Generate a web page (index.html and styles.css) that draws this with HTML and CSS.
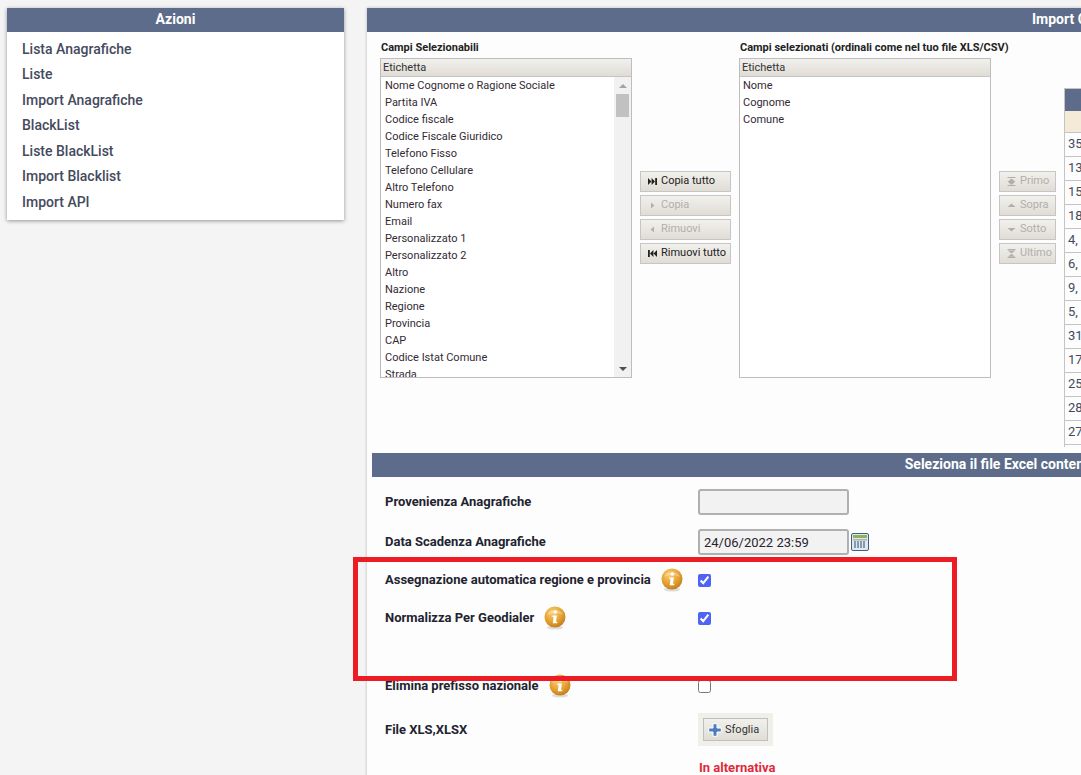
FILE: index.html
```html
<!DOCTYPE html>
<html lang="it">
<head>
<meta charset="utf-8">
<title>Import Contatti</title>
<link rel="stylesheet" href="styles.css">
</head>
<body>
<svg class="defs" width="0" height="0" aria-hidden="true">
  <defs>
    <radialGradient id="gold" cx="0.4" cy="0.3" r="0.8">
      <stop offset="0" stop-color="#f9d27a"/>
      <stop offset="0.55" stop-color="#e5a02f"/>
      <stop offset="1" stop-color="#b8741a"/>
    </radialGradient>
    <symbol id="info" viewBox="0 0 22 24">
      <ellipse cx="11" cy="21.5" rx="8" ry="2" fill="#ddd"/>
      <circle cx="11" cy="11" r="10.5" fill="url(#gold)"/>
      <path d="M3 9a8.5 7 0 0 1 16 0a12 8 0 0 0-16 0z" fill="#fff" opacity=".3"/>
      <circle cx="11.4" cy="6" r="1.7" fill="#fff"/>
      <path d="M8.6 9.6h4.3l-.9 6.2h1.4l-.3 1.5H8.8l.8-6.2H8.3z" fill="#fff"/>
    </symbol>
    <symbol id="i-last" viewBox="0 0 9 9"><path d="M0 1l3.4 3.5L0 8zM3.6 1l3.4 3.5L3.6 8zM7.2 1H9v7H7.2z"/></symbol>
    <symbol id="i-first" viewBox="0 0 9 9"><path d="M9 1L5.6 4.5 9 8zM5.4 1L2 4.5 5.4 8zM1.8 1H0v7h1.8z"/></symbol>
    <symbol id="i-next" viewBox="0 0 9 9"><path d="M3 1.5l3.4 3-3.4 3z"/></symbol>
    <symbol id="i-prev" viewBox="0 0 9 9"><path d="M6 1.5l-3.4 3 3.4 3z"/></symbol>
    <symbol id="i-top" viewBox="0 0 9 9"><path d="M.5 0h8v1h-8zM4.5 1.5L8 4.4H1zM.5 4.6h8L4.5 8zM.5 8h8v1h-8z"/></symbol>
    <symbol id="i-up" viewBox="0 0 9 9"><path d="M4.5 2.5L8.5 6H.5z"/></symbol>
    <symbol id="i-down" viewBox="0 0 9 9"><path d="M4.5 6.5L8.5 3H.5z"/></symbol>
    <symbol id="i-bottom" viewBox="0 0 9 9"><path d="M.5 0h8v1h-8zM.5 1.5h8L4.5 4.6zM4.5 4.8L8 7.8H1zM.5 8h8v1h-8z"/></symbol>
  </defs>
</svg>

<aside class="card">
  <h2 class="bar">Azioni</h2>
  <ul class="menu">
    <li>Lista Anagrafiche</li>
    <li>Liste</li>
    <li>Import Anagrafiche</li>
    <li>BlackList</li>
    <li>Liste BlackList</li>
    <li>Import Blacklist</li>
    <li>Import API</li>
  </ul>
</aside>

<main class="panel">
  <h1 class="bar">Import Contatti</h1>
  <section class="picker">
    <div class="col">
      <h3 class="col-title">Campi Selezionabili</h3>
      <div class="box">
        <div class="box-head">Etichetta</div>
        <div class="box-body">
          <ul class="items">
            <li>Nome Cognome o Ragione Sociale</li>
            <li>Partita IVA</li>
            <li>Codice fiscale</li>
            <li>Codice Fiscale Giuridico</li>
            <li>Telefono Fisso</li>
            <li>Telefono Cellulare</li>
            <li>Altro Telefono</li>
            <li>Numero fax</li>
            <li>Email</li>
            <li>Personalizzato 1</li>
            <li>Personalizzato 2</li>
            <li>Altro</li>
            <li>Nazione</li>
            <li>Regione</li>
            <li>Provincia</li>
            <li>CAP</li>
            <li>Codice Istat Comune</li>
            <li>Strada</li>
          </ul>
          <div class="scroll">
            <span class="arrow-up"></span>
            <span class="thumb"></span>
            <span class="arrow-down"></span>
          </div>
        </div>
      </div>
    </div>

    <div class="btns btns-move">
      <button class="btn"><svg class="ic"><use href="#i-last"/></svg>Copia tutto</button>
      <button class="btn off"><svg class="ic"><use href="#i-next"/></svg>Copia</button>
      <button class="btn off"><svg class="ic"><use href="#i-prev"/></svg>Rimuovi</button>
      <button class="btn"><svg class="ic"><use href="#i-first"/></svg>Rimuovi tutto</button>
    </div>

    <div class="col">
      <h3 class="col-title">Campi selezionati (ordinali come nel tuo file XLS/CSV)</h3>
      <div class="box">
        <div class="box-head">Etichetta</div>
        <div class="box-body">
          <ul class="items items-chosen">
            <li>Nome</li>
            <li>Cognome</li>
            <li>Comune</li>
          </ul>
        </div>
      </div>
    </div>

    <div class="btns btns-order">
      <button class="btn off"><svg class="ic"><use href="#i-top"/></svg>Primo</button>
      <button class="btn off"><svg class="ic"><use href="#i-up"/></svg>Sopra</button>
      <button class="btn off"><svg class="ic"><use href="#i-down"/></svg>Sotto</button>
      <button class="btn off"><svg class="ic"><use href="#i-bottom"/></svg>Ultimo</button>
    </div>

    <div class="sample">
      <div class="sample-head"></div>
      <div class="sample-sub"></div>
      <div class="sample-row">35</div>
      <div class="sample-row">13</div>
      <div class="sample-row">15</div>
      <div class="sample-row">18</div>
      <div class="sample-row">4,</div>
      <div class="sample-row">6,</div>
      <div class="sample-row">9,</div>
      <div class="sample-row">5,</div>
      <div class="sample-row">31</div>
      <div class="sample-row">17</div>
      <div class="sample-row">25</div>
      <div class="sample-row">28</div>
      <div class="sample-row">27</div>
      <div class="sample-row"></div>
    </div>
  </section>

  <section class="upload">
    <h2 class="bar">Seleziona il file Excel contenente le anagrafiche inserite</h2>
    <form class="form">
      <div class="row r-prov">
        <label class="lbl">Provenienza Anagrafiche</label>
        <input class="field" type="text">
      </div>
      <div class="row r-date">
        <label class="lbl">Data Scadenza Anagrafiche</label>
        <div class="ctl">
          <input class="field" type="text" value="24/06/2022 23:59">
          <svg class="cal" viewBox="0 0 18 18" width="18" height="18">
            <rect x=".5" y=".5" width="17" height="17" rx="1.5" fill="#dfe7ef" stroke="#3f5f86"/>
            <rect x="2" y="2" width="14" height="3" fill="#8fb35a"/>
            <rect x="2" y="6" width="14" height="1.5" fill="#aeb8a4"/>
            <path d="M4 8v7M7 8v7M10 8v7M13 8v7" stroke="#55708f" stroke-width="1.3"/>
          </svg>
        </div>
      </div>
      <div class="row r-auto">
        <label class="lbl">Assegnazione automatica regione e provincia<svg class="info"><use href="#info"/></svg></label>
        <input class="chk" type="checkbox" checked>
      </div>
      <div class="row r-norm">
        <label class="lbl">Normalizza Per Geodialer<svg class="info"><use href="#info"/></svg></label>
        <input class="chk" type="checkbox" checked>
      </div>
      <div class="row r-pref">
        <label class="lbl">Elimina prefisso nazionale<svg class="info"><use href="#info"/></svg></label>
        <input class="chk" type="checkbox">
      </div>
      <div class="row r-file">
        <label class="lbl lbl-file">File XLS,XLSX</label>
        <div class="file-wrap">
          <button class="file-btn" type="button">
            <svg viewBox="0 0 14 14" width="14" height="14"><path d="M5 .7h4v4.3h4.3v4H9v4.3H5V9H.7V5H5z" fill="#4f7cc0" stroke="#fff"/></svg>
            Sfoglia
          </button>
        </div>
      </div>
      <div class="row r-alt">
        <span></span>
        <strong class="alt">In alternativa</strong>
      </div>
    </form>
  </section>
</main>

<div class="highlight"></div>
</body>
</html>
```

FILE: styles.css
```css
* { box-sizing: border-box; }
html, body { height: 100%; }
body {
  margin: 0;
  padding: 8px 0 0 7px;
  display: flex;
  align-items: flex-start;
  gap: 23px;
  overflow: hidden;
  background: #f4f4f4;
  font-family: Roboto, "Liberation Sans", sans-serif;
  color: #222;
}
.defs { position: absolute; }
ul { list-style: none; margin: 0; padding: 0; }
h1, h2, h3 { margin: 0; }

.bar {
  height: 24px;
  line-height: 23px;
  background: #5c6c8a;
  color: #fff;
  font-size: 14px;
  font-weight: 700;
  text-align: center;
}

.card {
  flex: none;
  width: 337px;
  background: #fff;
  box-shadow: 0 1px 4px rgba(0, 0, 0, .4);
}
.menu { padding: 4.5px 15px 4.5px; }
.menu li {
  line-height: 25.5px;
  font-size: 14px;
  font-weight: 500;
  color: #454a5e;
}

.panel {
  flex: none;
  width: 1426px;
  height: 900px;
  background: #fdfdfd;
  box-shadow: 0 0 3px rgba(0, 0, 0, .25);
}

.picker {
  display: flex;
  align-items: flex-start;
  gap: 8px;
  height: 421px;
  padding: 9px 0 0 13px;
}
.col { flex: none; width: 252px; }
.col-title {
  height: 17px;
  line-height: 13px;
  padding-left: 1px;
  font-size: 11px;
  font-weight: 700;
  white-space: nowrap;
  color: #222;
}
.box {
  height: 320px;
  border: 1px solid #bdbdbd;
  background: #fff;
  overflow: hidden;
}
.box-head {
  height: 18px;
  line-height: 17px;
  padding-left: 2px;
  font-size: 11px;
  color: #333;
  background: linear-gradient(#f2f0ec, #e0ddd6);
  border-bottom: 1px solid #c4c4c4;
}
.box-body { display: flex; height: 301px; }
.items { flex: 1; padding: 0 0 0 4px; overflow: hidden; }
.items-chosen { padding-left: 3px; }
.items li {
  height: 17px;
  line-height: 17px;
  font-size: 11px;
  color: #332a33;
  white-space: nowrap;
}
.scroll {
  flex: none;
  width: 17px;
  background: #f1f1f1;
  display: flex;
  flex-direction: column;
  align-items: center;
}
.arrow-up, .arrow-down {
  width: 0;
  height: 0;
  border-left: 4px solid transparent;
  border-right: 4px solid transparent;
}
.arrow-up { margin-top: 7px; border-bottom: 4px solid #a3a3a3; }
.arrow-down { margin-top: auto; margin-bottom: 7px; border-top: 4px solid #505050; }
.thumb { width: 13px; height: 23px; margin-top: 6px; background: #c1c1c1; }

.btns {
  flex: none;
  display: flex;
  flex-direction: column;
  gap: 3px;
  margin-top: 130px;
}
.btns-move { width: 91px; }
.btns-order { width: 57px; }
.btn {
  display: flex;
  align-items: center;
  height: 21px;
  padding: 0 0 2px 7px;
  border: 1px solid #c6c6c6;
  background: linear-gradient(#f2f0ec, #e0ddd6);
  font: 11px Roboto, "Liberation Sans", sans-serif;
  color: #222;
  white-space: nowrap;
}
.btn.off { color: #b0afab; }
.btn .ic {
  flex: none;
  width: 9px;
  height: 9px;
  margin: 2px 4px 0 0;
  fill: currentColor;
}

.sample {
  flex: none;
  width: 200px;
  height: 359px;
  margin-top: 47px;
  overflow: hidden;
  border-left: 1px solid #c4c4c4;
  border-top: 1px solid #c4c4c4;
}
.sample-head { height: 22px; background: #5c6c8a; }
.sample-sub { height: 22px; background: #f5ead8; border-bottom: 1px solid #c4c4c4; }
.sample-row {
  height: 24px;
  line-height: 21px;
  padding-left: 3px;
  border-bottom: 1px solid #c4c4c4;
  font-size: 13px;
  color: #444a60;
}

.upload { margin: 0 5px; }
.form { padding: 12px 0 0 13px; }
.row {
  display: grid;
  grid-template-columns: 313px auto;
  justify-content: start;
  align-items: center;
  min-height: 26px;
}
.r-date { margin-top: 14px; }
.r-auto { margin-top: 12px; }
.r-norm { margin-top: 12px; }
.r-pref { margin-top: 42px; }
.r-file { margin-top: 14px; }
.r-alt { margin-top: 8px; }
.lbl {
  display: flex;
  align-items: center;
  height: 26px;
  padding-bottom: 2px;
  font-size: 13px;
  font-weight: 700;
  color: #1f2430;
  white-space: nowrap;
}
.lbl-file { padding-bottom: 0; }
.ctl { display: flex; align-items: center; gap: 2px; }
.field {
  width: 151px;
  height: 26px;
  padding: 0 4px;
  border: 2px solid #b0b0b0;
  border-radius: 3px;
  background: #f2f2f2;
  font: 13px Roboto, "Liberation Sans", sans-serif;
  color: #2a2230;
}
.info { flex: none; width: 22px; height: 24px; margin: 1px 0 -1px 10px; }
.chk {
  width: 13px;
  height: 13px;
  margin: 0;
  accent-color: #4f63f5;
}
.file-wrap {
  width: 75px;
  height: 33px;
  padding: 5px;
  background: #f0efea;
}
.file-btn {
  display: flex;
  align-items: center;
  gap: 3px;
  width: 65px;
  height: 23px;
  padding: 0 0 0 4px;
  border: 1px solid #c0c0ba;
  background: linear-gradient(#f2f0ec, #e0ddd6);
  font: 11px Roboto, "Liberation Sans", sans-serif;
  color: #333;
}
.alt { font-size: 13px; font-weight: 700; color: #e02a3a; margin-left: 1px; }

.highlight {
  position: absolute;
  left: 353px;
  top: 557px;
  width: 604px;
  height: 124px;
  border: 5px solid #ed1c24;
  pointer-events: none;
}
```
